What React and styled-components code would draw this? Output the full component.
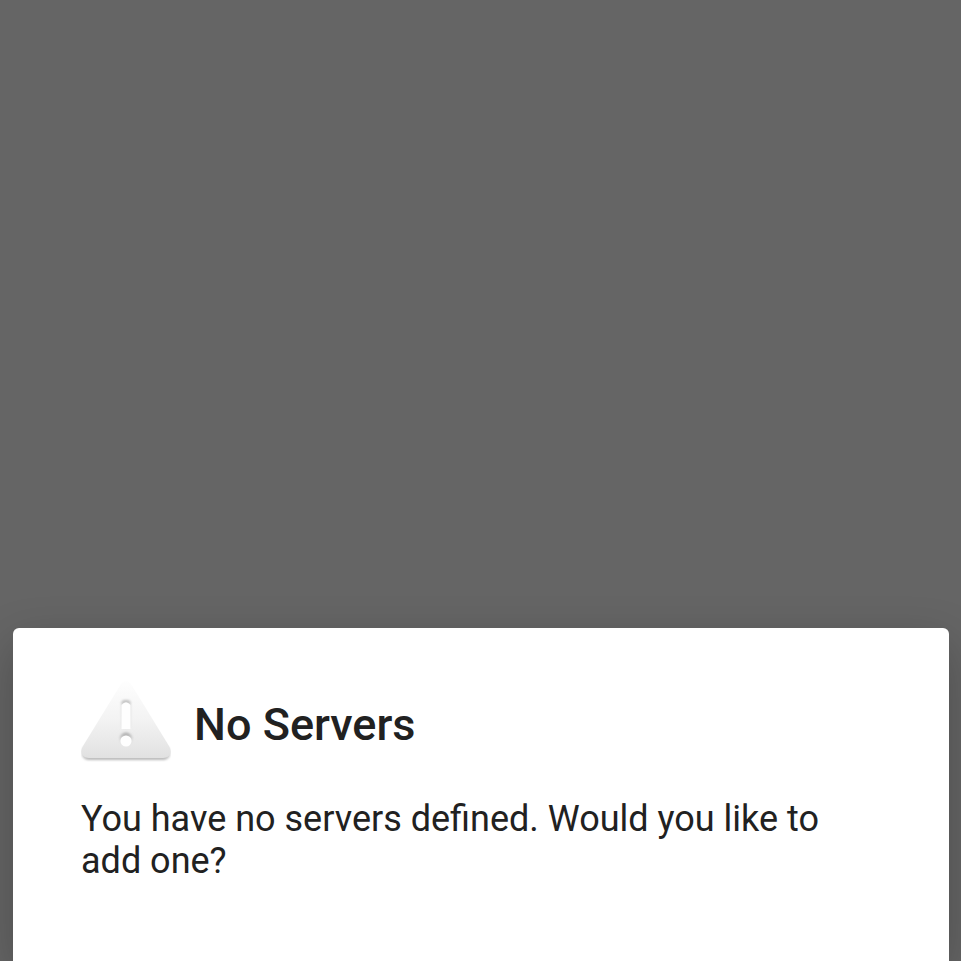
import React from "react";
import styled, { createGlobalStyle } from "styled-components";

export default function App() {
  return (
    <>
      <GlobalStyle />
      <Scrim>
        <Dialog role="alertdialog" aria-labelledby="dialog-title" aria-describedby="dialog-message">
          <TitleRow>
            <WarningIcon />
            <Title id="dialog-title">No Servers</Title>
          </TitleRow>
          <Message id="dialog-message">
            You have no servers defined. Would you like to add one?
          </Message>
        </Dialog>
      </Scrim>
    </>
  );
}

function WarningIcon() {
  return (
    <Icon viewBox="0 0 90 90" aria-hidden="true">
      <defs>
        <linearGradient id="face" x1="0" y1="0" x2="0" y2="1">
          <stop offset="0" stopColor="#fefefe" />
          <stop offset="0.5" stopColor="#f3f3f3" />
          <stop offset="1" stopColor="#e1e1e1" />
        </linearGradient>
        <linearGradient id="edge" x1="0" y1="0" x2="0" y2="1">
          <stop offset="0.8" stopColor="#cccccc" stopOpacity="0" />
          <stop offset="1" stopColor="#b0b0b0" />
        </linearGradient>
        <linearGradient id="barShade" x1="0" y1="0" x2="0" y2="1">
          <stop offset="0" stopColor="#b8b8b8" />
          <stop offset="0.2" stopColor="#dedede" />
          <stop offset="1" stopColor="#e6e6e6" />
        </linearGradient>
        <linearGradient id="dotShade" x1="0" y1="0" x2="0" y2="1">
          <stop offset="0" stopColor="#a8a8a8" />
          <stop offset="0.6" stopColor="#dcdcdc" />
          <stop offset="1" stopColor="#e2e2e2" />
        </linearGradient>
        <filter id="soft" x="-10%" y="-10%" width="120%" height="120%">
          <feGaussianBlur stdDeviation="0.8" />
        </filter>
      </defs>
      {/* lower rim */}
      <path
        d="M40 5Q45 -1 50 5L88 67C92 74 88 80 82 80H8C2 80 -2 74 2 67Z"
        fill="url(#edge)"
        filter="url(#soft)"
      />
      <path d="M40 4Q45 -2 50 4L88 66C92 73 88 78 82 78H8C2 78 -2 73 2 66Z" fill="url(#face)" />
      {/* exclamation mark */}
      <g filter="url(#soft)">
        <rect x="40" y="20" width="10" height="29" rx="4" fill="url(#barShade)" />
        <circle cx="45" cy="59" r="6.5" fill="url(#dotShade)" />
      </g>
      <path d="M40.5 25Q45 19.5 49.5 25V49H40.5Z" fill="#fefefe" />
      <circle cx="45" cy="61" r="5.6" fill="#fefefe" />
    </Icon>
  );
}

const GlobalStyle = createGlobalStyle`
  * {
    box-sizing: border-box;
  }
  body {
    margin: 0;
    font-family: Roboto, "Liberation Sans", sans-serif;
    color: #212121;
    background: #656565;
  }
`;

const Scrim = styled.main`
  display: flex;
  flex-direction: column;
  justify-content: flex-end;
  min-height: 100vh;
  padding: 0 12px 0 13px;
  overflow: hidden;
`;

const Dialog = styled.section`
  padding: 52px 68px 79px;
  border-radius: 6px 6px 0 0;
  background: #ffffff;
  box-shadow: 0 16px 48px rgba(0, 0, 0, 0.24);
`;

const TitleRow = styled.header`
  display: flex;
  align-items: center;
  gap: 23px;
`;

const Icon = styled.svg`
  flex: none;
  width: 90px;
  height: 90px;
`;

const Title = styled.h1`
  margin: 0;
  font-size: 45px;
  font-weight: 500;
  line-height: 54px;
`;

const Message = styled.p`
  margin: 28px 0 0;
  font-size: 36px;
  line-height: 42px;
`;
